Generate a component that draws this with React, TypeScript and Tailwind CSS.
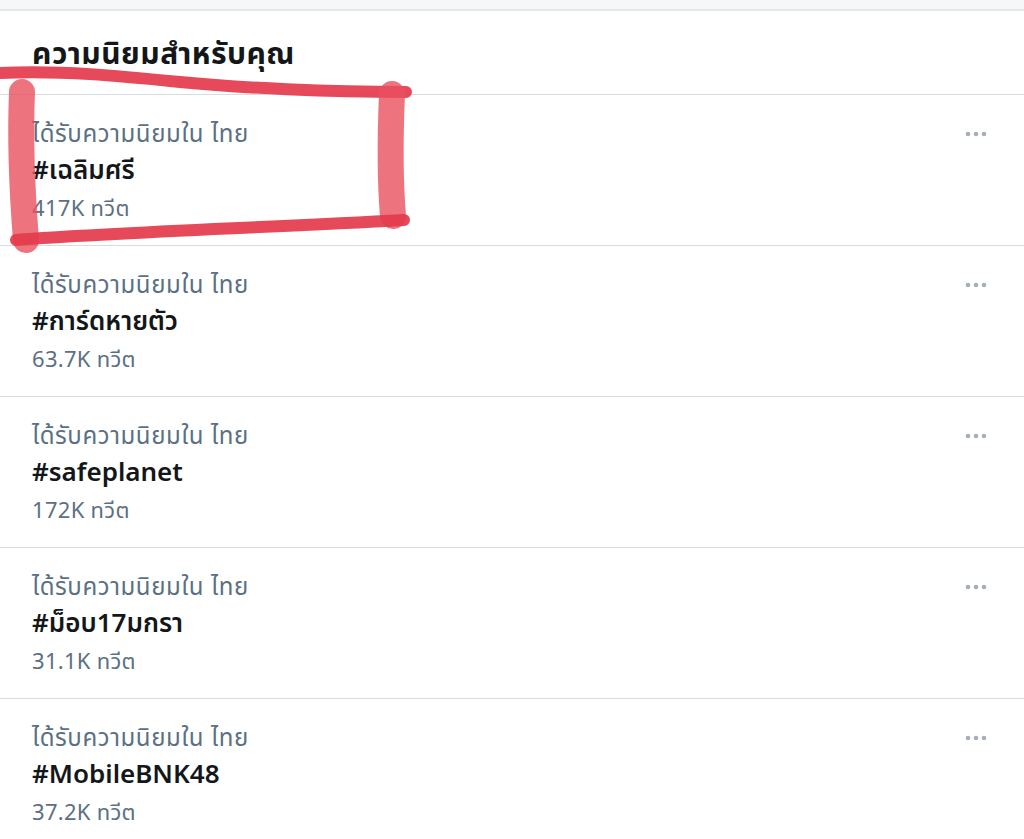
import React from "react";

const rows = [
  { tag: "#เฉลิมศรี", count: "417K ทวีต" },
  { tag: "#การ์ดหายตัว", count: "63.7K ทวีต" },
  { tag: "#safeplanet", count: "172K ทวีต" },
  { tag: "#ม็อบ17มกรา", count: "31.1K ทวีต" },
  { tag: "#MobileBNK48", count: "37.2K ทวีต" },
];

function Dots() {
  return (
    <svg width="24" height="6" viewBox="0 0 24 6" className="mt-[4px]">
      <circle cx="4" cy="3" r="2.3" fill="#a3b0bc" />
      <circle cx="12" cy="3" r="2.3" fill="#a3b0bc" />
      <circle cx="20" cy="3" r="2.3" fill="#a3b0bc" />
    </svg>
  );
}

export default function App() {
  return (
    <div
      className="relative w-[1024px] h-[839px] overflow-hidden bg-white"
      style={{ fontFamily: '"Noto Sans", "Noto Sans Thai", "Liberation Sans", sans-serif' }}
    >
      <div className="h-[11px] bg-[#f6f7f9] border-b-2 border-[#e4e8ec]" />
      <div className="h-[84px] flex items-center px-8 border-b border-[#d6dce1]">
        <h1 className="text-[30px] font-bold text-[#14171a] leading-none tracking-[0.5px]">ความนิยมสำหรับคุณ</h1>
      </div>
      {rows.map((r) => (
        <div key={r.tag} className="h-[151px] border-b border-[#d6dce1] px-8 flex justify-between">
          <div className="pt-[23px] flex flex-col">
            <div className="h-[30px] flex items-center text-[24px] text-[#5b7083] tracking-[0.6px]">ได้รับความนิยมใน ไทย</div>
            <div className="h-[40px] mt-[1px] flex items-center text-[26px] font-semibold text-[#14171a]">{r.tag}</div>
            <div className="h-[36px] flex items-center text-[22px] text-[#5b7083] tracking-[0.3px]">{r.count}</div>
          </div>
          <div className="pt-[32px] pr-[4px]">
            <Dots />
          </div>
        </div>
      ))}
      <svg
        className="absolute left-0 top-0 pointer-events-none"
        width="1024"
        height="839"
        viewBox="0 0 1024 839"
      >
        <g fill="none" strokeLinecap="round" strokeLinejoin="round">
          <path d="M0 73 C 60 70, 120 76, 180 82 S 330 92, 406 92" stroke="#e4394b" strokeWidth="12" opacity="0.92" />
          <path d="M22 92 C 20 140, 22 190, 26 240" stroke="#e8505f" strokeWidth="26" opacity="0.8" />
          <path d="M392 94 C 390 140, 390 180, 393 216" stroke="#e8505f" strokeWidth="26" opacity="0.8" />
          <path d="M16 240 C 120 232, 260 228, 404 220" stroke="#e4394b" strokeWidth="12" opacity="0.92" />
        </g>
      </svg>
    </div>
  );
}
